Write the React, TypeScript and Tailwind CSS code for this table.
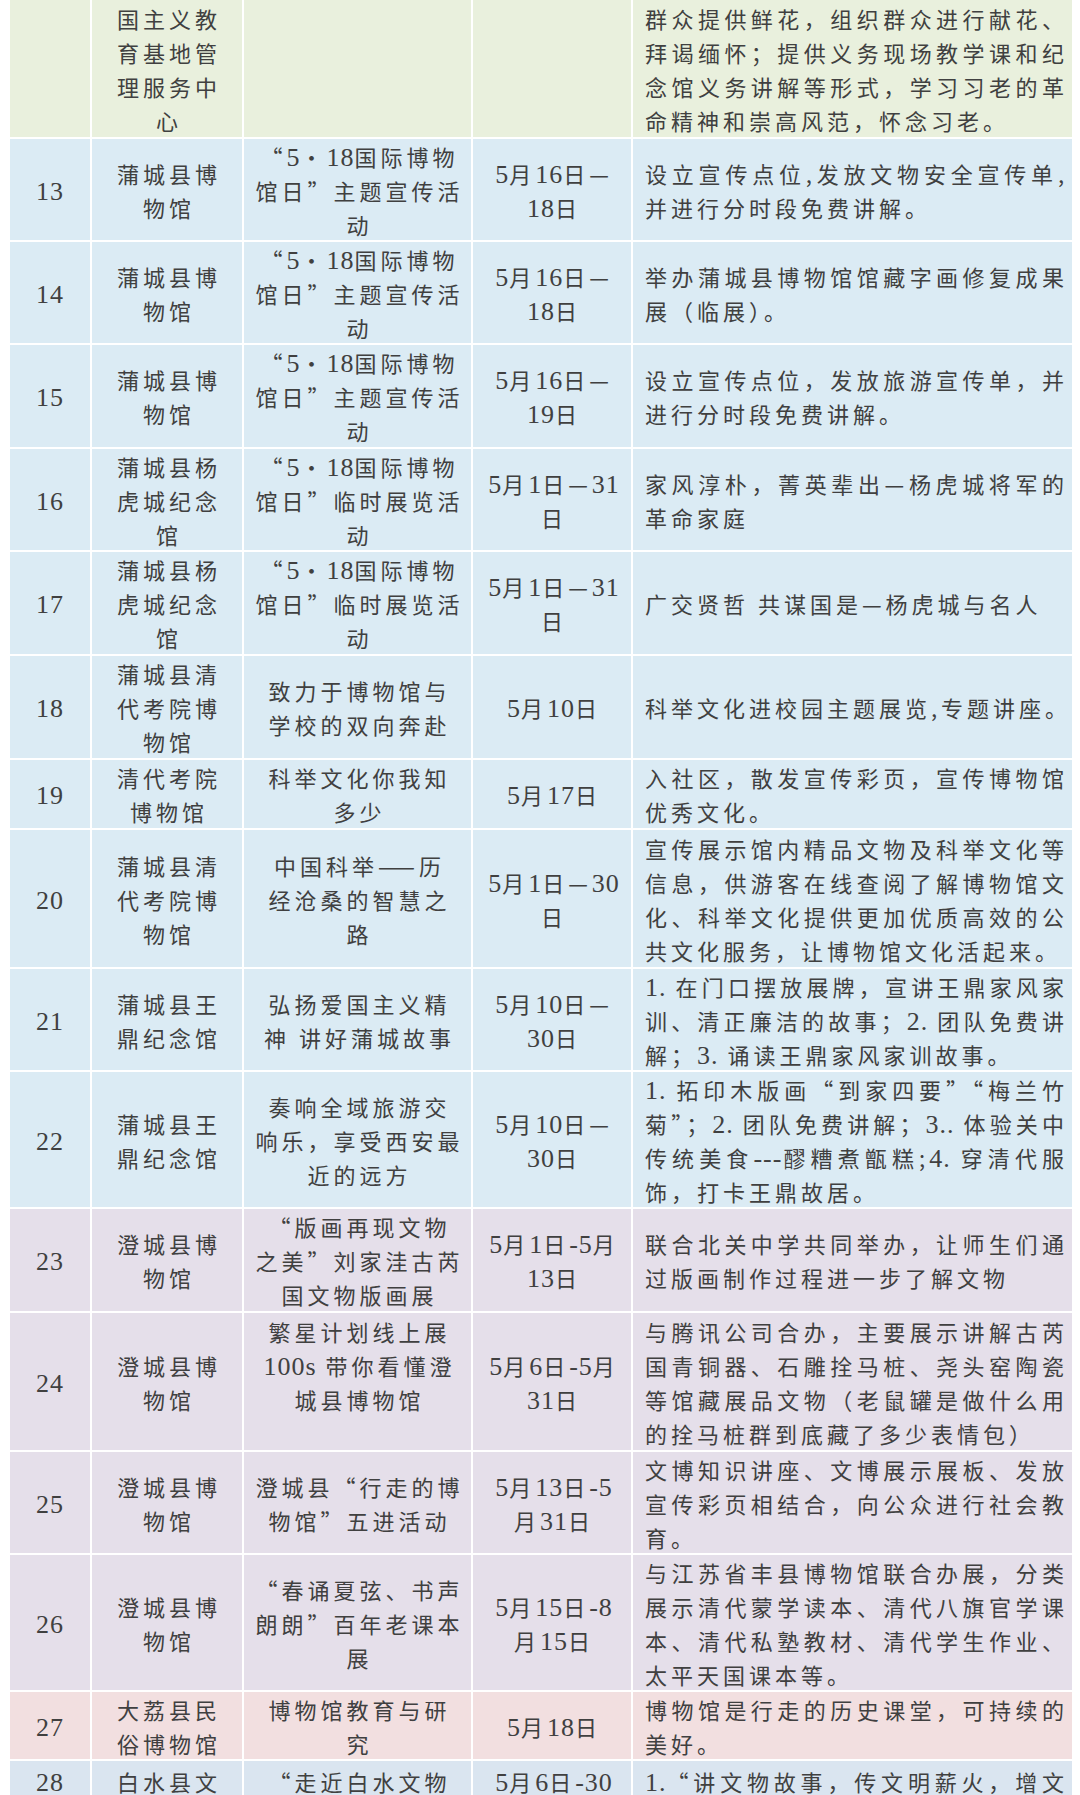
import React from 'react';

type Row = {
  h: string;
  bg: string;
  n: string;
  a: string[];
  b: string[];
  c: string[];
  d: string[];
  top?: boolean;
  more?: boolean;
};

const G = 'bg-[#e9f0dd]';
const B = 'bg-[#dbebf4]';
const P = 'bg-[#e5dfea]';
const K = 'bg-[#f2dfe0]';
const B2 = 'bg-[#dae5f0]';

const rows: Row[] = [
  {
    h: 'h-[137px]', bg: G, n: '',
    a: ['国主义教', '育基地管', '理服务中', '心'], b: [], c: [],
    d: ['群众提供鲜花，组织群众进行献花、', '拜谒缅怀；提供义务现场教学课和纪', '念馆义务讲解等形式，学习习老的革', '命精神和崇高风范，怀念习老。'],
  },
  {
    h: 'h-[101px]', bg: B, n: '13',
    a: ['蒲城县博', '物馆'], b: ['“5•18国际博物', '馆日”主题宣传活', '动'], c: ['5月16日—', '18日'],
    d: ['设立宣传点位,发放文物安全宣传单,', '并进行分时段免费讲解。'],
  },
  {
    h: 'h-[101px]', bg: B, n: '14',
    a: ['蒲城县博', '物馆'], b: ['“5•18国际博物', '馆日”主题宣传活', '动'], c: ['5月16日—', '18日'],
    d: ['举办蒲城县博物馆馆藏字画修复成果', '展（临展）。'],
  },
  {
    h: 'h-[102px]', bg: B, n: '15',
    a: ['蒲城县博', '物馆'], b: ['“5•18国际博物', '馆日”主题宣传活', '动'], c: ['5月16日—', '19日'],
    d: ['设立宣传点位，发放旅游宣传单，并', '进行分时段免费讲解。'],
  },
  {
    h: 'h-[101px]', bg: B, n: '16',
    a: ['蒲城县杨', '虎城纪念', '馆'], b: ['“5•18国际博物', '馆日”临时展览活', '动'], c: ['5月1日—31', '日'],
    d: ['家风淳朴，菁英辈出—杨虎城将军的', '革命家庭'],
  },
  {
    h: 'h-[102px]', bg: B, n: '17',
    a: ['蒲城县杨', '虎城纪念', '馆'], b: ['“5•18国际博物', '馆日”临时展览活', '动'], c: ['5月1日—31', '日'],
    d: ['广交贤哲 共谋国是—杨虎城与名人'],
  },
  {
    h: 'h-[102px]', bg: B, n: '18',
    a: ['蒲城县清', '代考院博', '物馆'], b: ['致力于博物馆与', '学校的双向奔赴'], c: ['5月10日'],
    d: ['科举文化进校园主题展览,专题讲座。'],
  },
  {
    h: 'h-[68px]', bg: B, n: '19',
    a: ['清代考院', '博物馆'], b: ['科举文化你我知', '多少'], c: ['5月17日'],
    d: ['入社区，散发宣传彩页，宣传博物馆', '优秀文化。'],
  },
  {
    h: 'h-[137px]', bg: B, n: '20',
    a: ['蒲城县清', '代考院博', '物馆'], b: ['中国科举——历', '经沧桑的智慧之', '路'], c: ['5月1日—30', '日'],
    d: ['宣传展示馆内精品文物及科举文化等', '信息，供游客在线查阅了解博物馆文', '化、科举文化提供更加优质高效的公', '共文化服务，让博物馆文化活起来。'],
  },
  {
    h: 'h-[101px]', bg: B, n: '21',
    a: ['蒲城县王', '鼎纪念馆'], b: ['弘扬爱国主义精', '神 讲好蒲城故事'], c: ['5月10日—', '30日'],
    d: ['1. 在门口摆放展牌，宣讲王鼎家风家', '训、清正廉洁的故事；2. 团队免费讲', '解；3. 诵读王鼎家风家训故事。'],
  },
  {
    h: 'h-[135px]', bg: B, n: '22',
    a: ['蒲城县王', '鼎纪念馆'], b: ['奏响全域旅游交', '响乐，享受西安最', '近的远方'], c: ['5月10日—', '30日'],
    d: ['1. 拓印木版画“到家四要”“梅兰竹', '菊”；2. 团队免费讲解；3.. 体验关中', '传统美食---醪糟煮甑糕;4. 穿清代服', '饰，打卡王鼎故居。'],
  },
  {
    h: 'h-[102px]', bg: P, n: '23',
    a: ['澄城县博', '物馆'], b: ['“版画再现文物', '之美”刘家洼古芮', '国文物版画展'], c: ['5月1日-5月', '13日'],
    d: ['联合北关中学共同举办，让师生们通', '过版画制作过程进一步了解文物'],
  },
  {
    h: 'h-[137px]', bg: P, n: '24',
    a: ['澄城县博', '物馆'], b: ['繁星计划线上展', '100s 带你看懂澄', '城县博物馆', ''], c: ['5月6日-5月', '31日'],
    d: ['与腾讯公司合办，主要展示讲解古芮', '国青铜器、石雕拴马桩、尧头窑陶瓷', '等馆藏展品文物（老鼠罐是做什么用', '的拴马桩群到底藏了多少表情包）'],
  },
  {
    h: 'h-[101px]', bg: P, n: '25',
    a: ['澄城县博', '物馆'], b: ['澄城县“行走的博', '物馆”五进活动'], c: ['5月13日-5', '月31日'],
    d: ['文博知识讲座、文博展示展板、发放', '宣传彩页相结合，向公众进行社会教', '育。'],
  },
  {
    h: 'h-[135px]', bg: P, n: '26',
    a: ['澄城县博', '物馆'], b: ['“春诵夏弦、书声', '朗朗”百年老课本', '展'], c: ['5月15日-8', '月15日'],
    d: ['与江苏省丰县博物馆联合办展，分类', '展示清代蒙学读本、清代八旗官学课', '本、清代私塾教材、清代学生作业、', '太平天国课本等。'],
  },
  {
    h: 'h-[67px]', bg: K, n: '27',
    a: ['大荔县民', '俗博物馆'], b: ['博物馆教育与研', '究'], c: ['5月18日'],
    d: ['博物馆是行走的历史课堂，可持续的', '美好。'],
  },
  {
    h: 'h-[34px]', bg: B2, n: '28', top: true, more: true,
    a: ['白水县文'], b: ['“走近白水文物'], c: ['5月6日-30'],
    d: ['1.“讲文物故事，传文明薪火，增文'],
  },
];

const LATIN = /([0-9A-Za-z.\-]+)/;

function lineClass(justify?: boolean, short?: boolean) {
  if (short && justify) return 'h-[28px] leading-[28px] whitespace-nowrap text-justify [text-align-last:justify]';
  if (short) return 'h-[28px] leading-[28px] whitespace-nowrap';
  if (justify) return 'h-[34px] whitespace-nowrap text-justify [text-align-last:justify]';
  return 'h-[34px] whitespace-nowrap';
}

function Line({ text, justify, short }: { text: string; justify?: boolean; short?: boolean }) {
  const parts = text.split(LATIN);
  return (
    <div className={lineClass(justify, short)}>
      {parts.map((p, i) =>
        i % 2 === 1 ? (
          <span key={i} className="[font-family:'Liberation_Serif',serif] text-[26px] tracking-[1px]">
            {p}
          </span>
        ) : (
          <React.Fragment key={i}>{p}</React.Fragment>
        )
      )}
    </div>
  );
}

function CenterCell({ lines, bg, top }: { lines: string[]; bg: string; top?: boolean }) {
  return (
    <div className={`${bg} flex flex-col items-center pl-[4px] ${top ? 'justify-start pt-[6px]' : 'justify-center'}`}>
      {lines.map((l, i) => (
        <Line key={i} text={l} short={top} />
      ))}
    </div>
  );
}

export default function App() {
  return (
    <div className="w-[1080px] h-[1795px] overflow-hidden bg-white">
      <div className="ml-[10px] w-[1062px] flex flex-col gap-[2px] [font-family:'Noto_Sans_CJK_SC',sans-serif] text-[22px] leading-[34px] tracking-[4px] text-[#404040]">
        {rows.map((r, idx) => (
          <div key={idx} className={`${r.h} overflow-hidden grid grid-cols-[80px_150px_227px_158px_439px] gap-x-[2px]`}>
            <div className={`${r.bg} flex ${r.top ? 'items-start pt-[6px]' : 'items-center'} justify-center`}>
              {r.n && <Line text={r.n} short={r.top} />}
            </div>
            <CenterCell lines={r.a} bg={r.bg} top={r.top} />
            <CenterCell lines={r.b} bg={r.bg} top={r.top} />
            <CenterCell lines={r.c} bg={r.bg} top={r.top} />
            <div className={`${r.bg} flex flex-col pl-[12px] pr-[4px] ${r.top ? 'justify-start pt-[6px]' : 'justify-center'}`}>
              {r.d.map((l, i) => (
                <Line key={i} text={l} short={r.top} justify={r.more || i < r.d.length - 1} />
              ))}
            </div>
          </div>
        ))}
      </div>
    </div>
  );
}
